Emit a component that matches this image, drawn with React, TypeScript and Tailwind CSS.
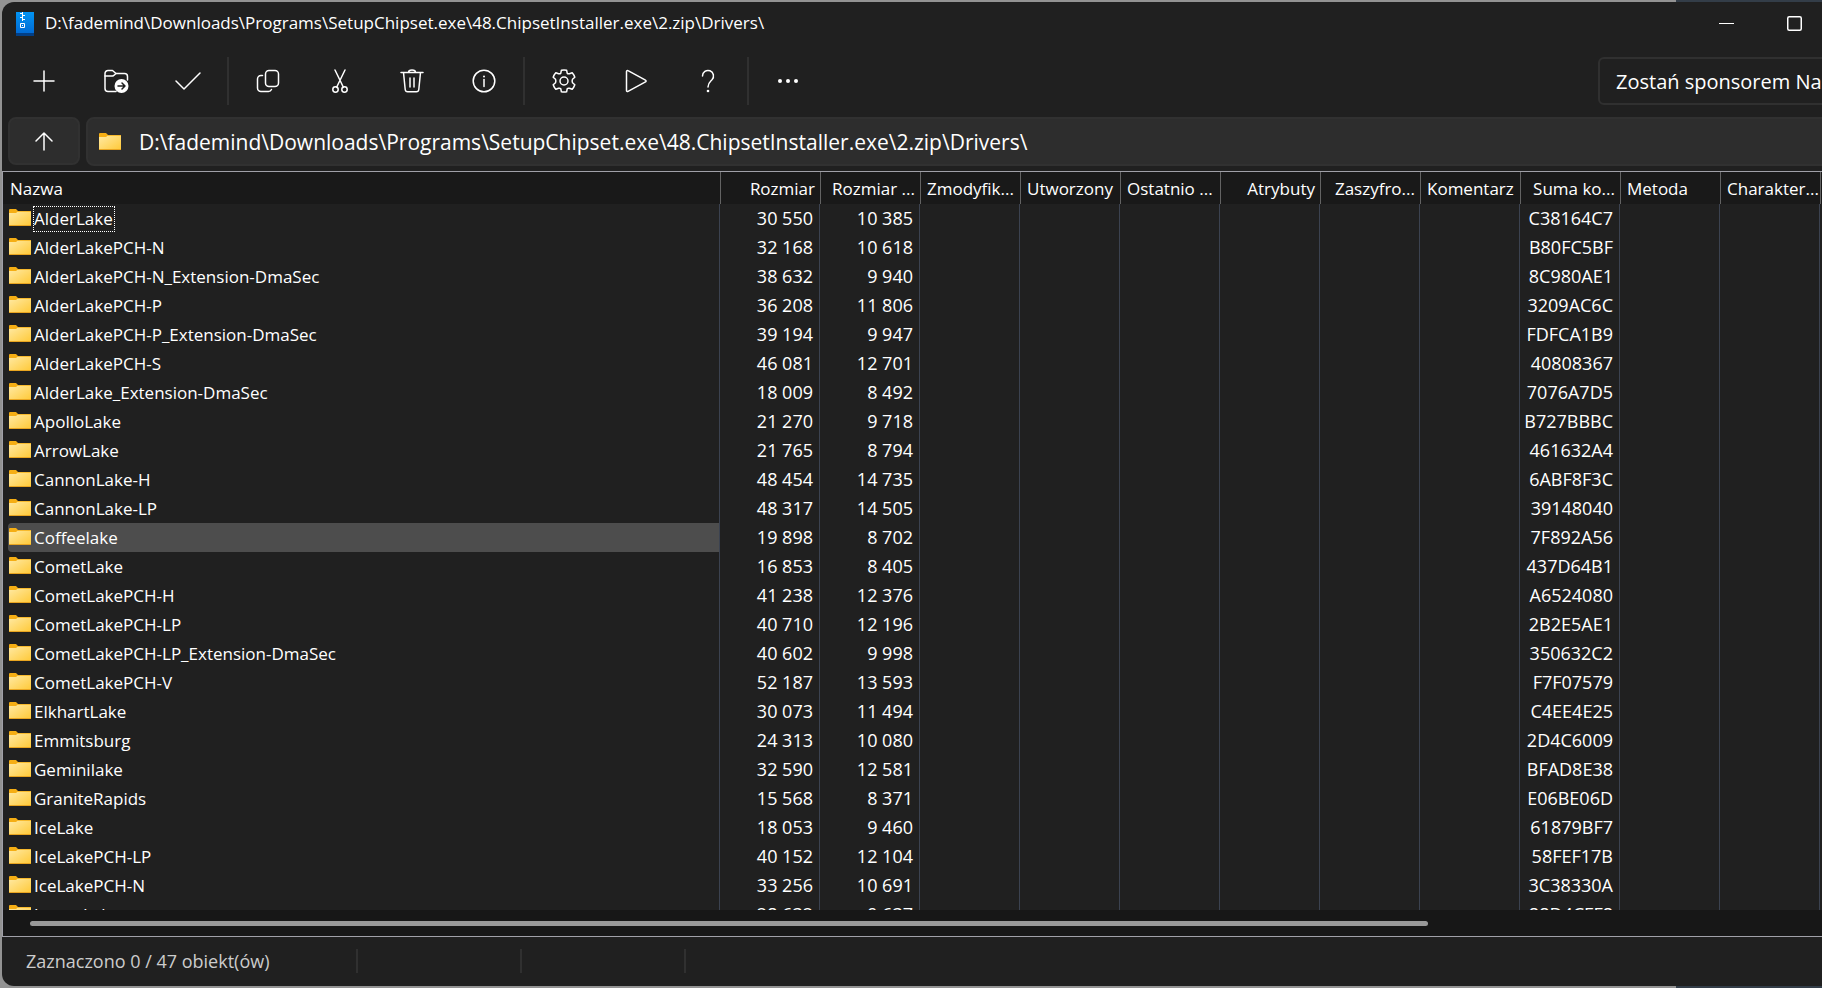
const TITLE = "D:\\fademind\\Downloads\\Programs\\SetupChipset.exe\\48.ChipsetInstaller.exe\\2.zip\\Drivers\\";

type Column = {
  label: string;
  align?: "right";
};

const columns: Column[] = [
  { label: "Rozmiar", align: "right" },
  { label: "Rozmiar ...", align: "right" },
  { label: "Zmodyfik..." },
  { label: "Utworzony" },
  { label: "Ostatnio ..." },
  { label: "Atrybuty", align: "right" },
  { label: "Zaszyfro...", align: "right" },
  { label: "Komentarz" },
  { label: "Suma ko...", align: "right" },
  { label: "Metoda" },
  { label: "Charakter..." },
];

// name, size, packed size, checksum
const files: [string, string, string, string][] = [
  ["AlderLake", "30 550", "10 385", "C38164C7"],
  ["AlderLakePCH-N", "32 168", "10 618", "B80FC5BF"],
  ["AlderLakePCH-N_Extension-DmaSec", "38 632", "9 940", "8C980AE1"],
  ["AlderLakePCH-P", "36 208", "11 806", "3209AC6C"],
  ["AlderLakePCH-P_Extension-DmaSec", "39 194", "9 947", "FDFCA1B9"],
  ["AlderLakePCH-S", "46 081", "12 701", "40808367"],
  ["AlderLake_Extension-DmaSec", "18 009", "8 492", "7076A7D5"],
  ["ApolloLake", "21 270", "9 718", "B727BBBC"],
  ["ArrowLake", "21 765", "8 794", "461632A4"],
  ["CannonLake-H", "48 454", "14 735", "6ABF8F3C"],
  ["CannonLake-LP", "48 317", "14 505", "39148040"],
  ["Coffeelake", "19 898", "8 702", "7F892A56"],
  ["CometLake", "16 853", "8 405", "437D64B1"],
  ["CometLakePCH-H", "41 238", "12 376", "A6524080"],
  ["CometLakePCH-LP", "40 710", "12 196", "2B2E5AE1"],
  ["CometLakePCH-LP_Extension-DmaSec", "40 602", "9 998", "350632C2"],
  ["CometLakePCH-V", "52 187", "13 593", "F7F07579"],
  ["ElkhartLake", "30 073", "11 494", "C4EE4E25"],
  ["Emmitsburg", "24 313", "10 080", "2D4C6009"],
  ["Geminilake", "32 590", "12 581", "BFAD8E38"],
  ["GraniteRapids", "15 568", "8 371", "E06BE06D"],
  ["IceLake", "18 053", "9 460", "61879BF7"],
  ["IceLakePCH-LP", "40 152", "12 104", "58FEF17B"],
  ["IceLakePCH-N", "33 256", "10 691", "3C38330A"],
  ["JasperLake", "28 632", "9 637", "88D4CFF8"],
];

const FOCUSED = "AlderLake";
const HOVERED = "Coffeelake";

function FolderIcon() {
  return (
    <svg width="22" height="17" viewBox="0 0 22 17" className="shrink-0">
      <defs>
        <linearGradient id="folder" x1="0" y1="0" x2="1" y2="1">
          <stop offset="0" stopColor="#ffe9a2" />
          <stop offset="1" stopColor="#ffc937" />
        </linearGradient>
      </defs>
      <path d="M0 1a1 1 0 0 1 1-1h6l2 2h13v5H0z" fill="#f5ae14" />
      <path d="M0 4h7l1.500-1.200H22V17H0z" fill="url(#folder)" />
      <path d="M0 16h22v1H0z" fill="#e9a520" />
    </svg>
  );
}

function ZipIcon() {
  return (
    <svg width="18" height="24" viewBox="0 0 18 24" className="shrink-0">
      <defs>
        <linearGradient id="zip" x1="0" y1="0" x2="0" y2="1">
          <stop offset="0" stopColor="#0294f2" />
          <stop offset="1" stopColor="#0169d3" />
        </linearGradient>
      </defs>
      <path d="M0 0h18v22H0z" fill="url(#zip)" />
      <path d="M0 21h18v3H0z" fill="#023f86" />
      <path d="M4 1.500h3M6 3.500h3M4 5.500h3M6 7.500h3M6.500 0v9" stroke="#fff" fill="none" />
      <path d="M4.500 11.500h4v4h-4zM6 13.500h1" stroke="#fff" fill="none" />
    </svg>
  );
}

const icons = {
  add: <path d="M12 2v20M2 12h20" />,
  extract: (
    <>
      <path d="M12 22.500H4a3 3 0 0 1-3-3V4.500a3 3 0 0 1 3-3h4.500l3.500 3h8.500a3 3 0 0 1 3 3V11" />
      <path d="M1 7H8.500a2 2 0 0 0 1.500-.7L12 4.500" />
      <circle cx="17.500" cy="17" r="7" fill="#fff" stroke="none" />
      <path d="M14 17h7M18 14l3 3-3 3" stroke="#202020" />
    </>
  ),
  test: <path d="M0 12l8 8L24 4" />,
  copy: (
    <>
      <rect x="9.500" y="1.500" width="13" height="16" rx="3.500" />
      <path d="M6.500 6.500H5a3.500 3.500 0 0 0-3.500 3.500v9A3.500 3.500 0 0 0 5 22.500h7a3.500 3.500 0 0 0 3.500-2" />
    </>
  ),
  cut: (
    <>
      <path d="M7 1l8.500 17.500M17 1L8.500 18.500" />
      <circle cx="7.500" cy="20.500" r="2.700" />
      <circle cx="16.500" cy="20.500" r="2.700" />
    </>
  ),
  remove: (
    <>
      <path d="M1 3.500h22M8.500 3.500a3.500 2.500 0 0 1 7 0M3.500 3.500l1.700 17a2.500 2.500 0 0 0 2.500 2.200h8.600a2.500 2.500 0 0 0 2.500-2.200l1.700-17" />
      <path d="M10 9v9M14 9v9" />
    </>
  ),
  info: (
    <>
      <circle cx="12" cy="12" r="10.800" />
      <path d="M12 10.500v7" />
      <circle cx="12" cy="7.500" r="1" fill="#fff" stroke="none" />
    </>
  ),
  options: (
    <>
      <circle cx="12" cy="12" r="4" />
      <path d="M9.400 1.200q2.600-.6 5.200 0l.6 3q.8.900 2.200.500l2.800-1q1.800 2 2.600 4.500l-2.300 2q-.8 1.800 0 3.600l2.300 2q-.8 2.500-2.600 4.500l-2.800-1q-1.400-.4-2.200.5l-.6 3q-2.600.6-5.200 0l-.6-3q-.8-.9-2.200-.5l-2.800 1q-1.800-2-2.600-4.500l2.300-2q.8-1.800 0-3.600l-2.300-2q.8-2.500 2.600-4.500l2.800 1q1.400.4 2.200-.5z" />
    </>
  ),
  benchmark: <path d="M2.500 2.500v19a1 1 0 0 0 1.500.9l17.500-9.500a1 1 0 0 0 0-1.800L4 1.600a1 1 0 0 0-1.500.9z" />,
  about: (
    <>
      <path d="M6.500 7a5.500 5.500 0 1 1 9.500 3.700c-2 2-4 3.300-4 7.300" />
      <circle cx="12" cy="22" r="1.300" fill="#fff" stroke="none" />
    </>
  ),
  more: (
    <g fill="#fff" stroke="none">
      <circle cx="4" cy="12" r="2" />
      <circle cx="12" cy="12" r="2" />
      <circle cx="20" cy="12" r="2" />
    </g>
  ),
  up: <path d="M12 21V4M4 12l8-8 8 8" />,
};

function Icon({ name }: { name: keyof typeof icons }) {
  return (
    <svg
      width="24"
      height="24"
      viewBox="0 0 24 24"
      fill="none"
      stroke="#fff"
      strokeWidth="1.500"
      strokeLinecap="round"
      strokeLinejoin="round"
      className="overflow-visible"
    >
      {icons[name]}
    </svg>
  );
}

function ToolButton({ name, label }: { name: keyof typeof icons; label: string }) {
  return (
    <button type="button" aria-label={label} className="flex h-12 w-[72px] shrink-0 items-center justify-center">
      <Icon name={name} />
    </button>
  );
}

function Separator() {
  return <div className="mx-[3px] h-12 w-[2px] shrink-0 bg-[#303030]" />;
}

function TitleBar() {
  return (
    <header className="flex h-[43px] shrink-0 items-center pl-[14px]">
      <ZipIcon />
      <h1 className="ml-[11px] flex-1 truncate pb-[2px] text-[17px] leading-6">{TITLE}</h1>
      <button type="button" aria-label="Minimalizuj" className="flex h-10 w-20 items-center justify-center">
        <svg width="15" height="15" viewBox="0 0 15 15">
          <path d="M0 7.500h15" stroke="#fff" />
        </svg>
      </button>
      <button type="button" aria-label="Maksymalizuj" className="flex h-10 w-14 items-center justify-center">
        <svg width="15" height="15" viewBox="0 0 15 15">
          <rect x="0.750" y="0.750" width="13.500" height="13.500" rx="1.500" stroke="#fff" strokeWidth="1.500" fill="none" />
        </svg>
      </button>
    </header>
  );
}

function Toolbar() {
  return (
    <div className="flex h-[72px] shrink-0 items-center pl-[6px]">
      <ToolButton name="add" label="Dodaj" />
      <ToolButton name="extract" label="Wypakuj" />
      <ToolButton name="test" label="Testuj" />
      <Separator />
      <ToolButton name="copy" label="Kopiuj" />
      <ToolButton name="cut" label="Przenieś" />
      <ToolButton name="remove" label="Usuń" />
      <ToolButton name="info" label="Informacje" />
      <Separator />
      <ToolButton name="options" label="Opcje" />
      <ToolButton name="benchmark" label="Test wydajności" />
      <ToolButton name="about" label="O programie" />
      <Separator />
      <ToolButton name="more" label="Więcej" />
      {/* the window runs past the right edge of the screen */}
      <button
        type="button"
        className="-mr-[70px] ml-auto h-12 w-[294px] shrink-0 rounded-md border-2 border-[#303030] pt-px pl-4 text-left text-[20px] leading-7 whitespace-nowrap"
      >
        Zostań sponsorem NanaZip
      </button>
    </div>
  );
}

function AddressBar() {
  return (
    <div className="flex h-[54px] shrink-0 items-start gap-[6px] pl-[6px]">
      <button
        type="button"
        aria-label="W górę"
        className="flex h-12 w-[72px] shrink-0 items-center justify-center rounded-lg border-2 border-[#313131] bg-[#2d2d2d]"
      >
        <Icon name="up" />
      </button>
      <label className="-mr-4 flex h-[49px] flex-1 items-center rounded-lg border-2 border-[#313131] bg-[#2d2d2d] pl-[11px]">
        <FolderIcon />
        <input
          type="text"
          aria-label="Ścieżka"
          defaultValue={TITLE}
          className="ml-[18px] flex-1 bg-transparent text-[21px] leading-7 outline-none"
        />
      </label>
    </div>
  );
}

function FileTable() {
  return (
    <div className="min-h-0 flex-1 overflow-hidden">
      <table className="w-[1917px] table-fixed border-separate border-spacing-0 text-[17px] leading-6">
        <colgroup>
          <col className="w-[717px]" />
          {columns.map((c, i) => (
            <col key={i} className="w-[100px]" />
          ))}
          <col className="w-[100px]" />
        </colgroup>
        <thead className="bg-[#191919]">
          <tr className="h-8">
            <th className="p-0 pt-[2px] pl-[7px] text-left font-normal">Nazwa</th>
            {columns.map((c, i) => (
              <th
                key={i}
                className={`overflow-hidden border-l border-[#636363] p-0 pt-[2px] font-normal whitespace-nowrap ${
                  c.align === "right" ? "pr-[5px] text-right" : "pl-[6px] text-left"
                }`}
              >
                {c.label}
              </th>
            ))}
            <th className="border-l border-[#636363] p-0" />
          </tr>
        </thead>
        <tbody>
          {files.map(([name, size, packed, sum]) => (
            <tr key={name} className="h-[29px]">
              <td className="border-r border-[#3b4250] p-0 pl-[5px]">
                <div
                  className={`flex h-[29px] items-start gap-[2px] rounded-l-sm pl-px ${
                    name === HOVERED ? "bg-[#4d4d4d]" : ""
                  }`}
                >
                  <span className="pt-[5px]">
                    <FolderIcon />
                  </span>
                  <span
                    className={`mt-[2px] border border-dotted pr-px ${
                      name === FOCUSED ? "border-white" : "border-transparent"
                    }`}
                  >
                    {name}
                  </span>
                </div>
              </td>
              {columns.map((c, i) => (
                <td
                  key={i}
                  className="border-r border-[#3b4250] p-0 pr-[6px] pb-[2px] text-right text-[18px] leading-6 whitespace-nowrap"
                >
                  {i === 0 ? size : i === 1 ? packed : i === 8 ? sum : ""}
                </td>
              ))}
              <td />
            </tr>
          ))}
        </tbody>
      </table>
    </div>
  );
}

function StatusBar() {
  return (
    <footer className="flex h-[49px] shrink-0 items-center pb-px pl-6 text-[18px] leading-6 text-[#cccccc]">
      <div className="w-[330px]">Zaznaczono 0 / 47 obiekt(ów)</div>
      <div className="h-6 w-[164px] border-l-2 border-[#303030]" />
      <div className="h-6 w-[164px] border-l-2 border-[#303030]" />
      <div className="h-6 border-l-2 border-[#303030]" />
    </footer>
  );
}

export default function App() {
  return (
    <div className="h-screen overflow-hidden bg-[linear-gradient(to_right,#939393_0%,#939393_92%,#333d48_92%,#333d48_100%)] py-[2px] pl-[2px] font-['Open_Sans','Noto_Sans',sans-serif] text-white">
      <div className="flex h-full flex-col overflow-hidden rounded-l-xl bg-[#202020]">
        <TitleBar />
        <Toolbar />
        <AddressBar />
        <main className="flex min-h-0 flex-1 flex-col border-y border-l border-[#a0a0a8]">
          <FileTable />
          <div className="flex h-[26px] shrink-0 items-center bg-[#171717] pl-[27px]">
            <div className="h-[5px] w-[78%] rounded-full bg-[#999999]" />
          </div>
        </main>
        <StatusBar />
      </div>
    </div>
  );
}
